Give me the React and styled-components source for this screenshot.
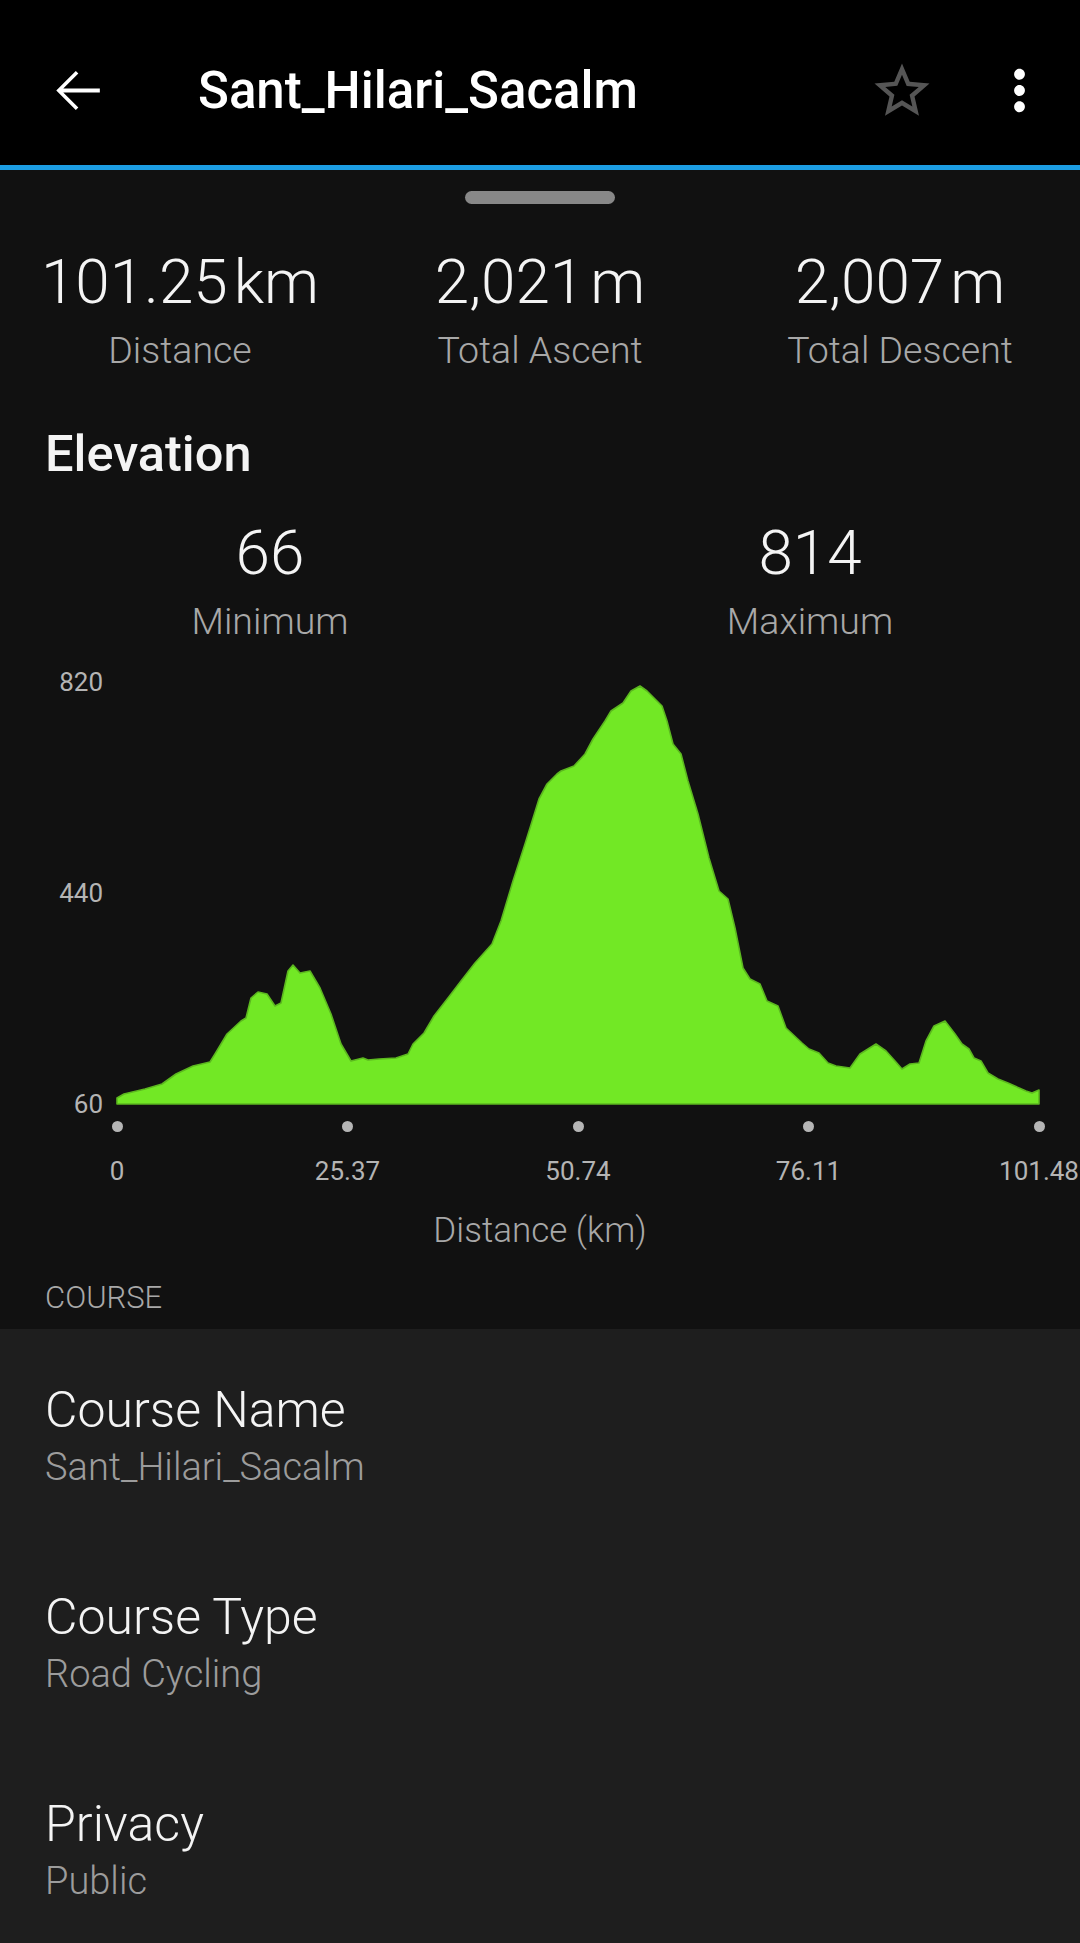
import React from 'react';
import styled, { createGlobalStyle } from 'styled-components';

const GlobalStyle = createGlobalStyle`
  html, body {
    margin: 0;
    padding: 0;
    background: #111111;
  }
  body {
    font-family: Roboto, 'Noto Sans', sans-serif;
    -webkit-font-smoothing: antialiased;
  }
`;

// elevation outline in page pixels, plot box is 117..1039 x 681..1103
const profile = [
  [117, 1097], [124, 1093], [145, 1088], [162, 1083], [176, 1073], [193, 1065], [210, 1061],
  [215, 1053], [227, 1033], [241, 1020], [246, 1017], [251, 997], [258, 991], [267, 993],
  [275, 1005], [281, 1002], [288, 970], [293, 964], [300, 972], [310, 970], [320, 987],
  [331, 1013], [341, 1043], [351, 1060], [363, 1057], [368, 1059], [379, 1058], [396, 1057],
  [408, 1053], [413, 1043], [424, 1032], [434, 1015], [448, 997], [461, 980], [475, 962],
  [492, 943], [501, 920], [513, 880], [525, 843], [530, 827], [539, 798], [547, 783],
  [557, 773], [561, 770], [574, 765], [585, 753], [593, 738], [605, 720], [611, 710],
  [623, 702], [631, 690], [640, 685], [647, 690], [662, 705], [667, 720], [673, 743],
  [681, 753], [688, 780], [698, 813], [709, 857], [719, 890], [728, 898], [735, 927],
  [743, 967], [750, 978], [760, 983], [767, 1000], [778, 1005], [786, 1027], [802, 1042],
  [809, 1048], [819, 1052], [828, 1062], [836, 1065], [850, 1067], [860, 1053], [876, 1043],
  [886, 1050], [895, 1060], [902, 1068], [910, 1063], [919, 1062], [926, 1040], [934, 1025],
  [945, 1020], [955, 1033], [962, 1043], [969, 1048], [974, 1057], [981, 1060], [988, 1072],
  [998, 1078], [1008, 1082], [1026, 1090], [1032, 1092], [1039, 1089], [1039, 1103], [117, 1103],
];

const stats = [
  { value: '101.25', unit: 'km', label: 'Distance' },
  { value: '2,021', unit: 'm', label: 'Total Ascent' },
  { value: '2,007', unit: 'm', label: 'Total Descent' },
];

const xTicks = ['0', '25.37', '50.74', '76.11', '101.48'];

const details = [
  { title: 'Course Name', value: 'Sant_Hilari_Sacalm' },
  { title: 'Course Type', value: 'Road Cycling' },
  { title: 'Privacy', value: 'Public' },
];

const App = () => {
  return (
    <>
      <GlobalStyle />
      <Page>
        <Header>
          <StatusBar />
          <Toolbar>
            <IconButton aria-label="back">
              <svg width="67" height="67" viewBox="0 0 24 24" fill="#ffffff">
                <path d="M20 11.3H6.9l5.4-5.4-.9-.9L4.4 12l7 7 .9-.9-5.4-5.4H20z" />
              </svg>
            </IconButton>
            <Title>Sant_Hilari_Sacalm</Title>
            <IconButton aria-label="favorite">
              <svg width="66" height="66" viewBox="0 0 24 24" fill="#555555">
                <path d="M22 9.24l-7.19-.62L12 2 9.19 8.63 2 9.24l5.46 4.73L5.82 21 12 17.27 18.18 21l-1.63-7.03L22 9.24zM12 15.4l-3.76 2.27 1-4.28-3.32-2.88 4.38-.38L12 6.1l1.71 4.04 4.38.38-3.32 2.88 1 4.28L12 15.4z" />
              </svg>
            </IconButton>
            <IconButton aria-label="more" $last>
              <svg width="65" height="65" viewBox="0 0 24 24" fill="#ffffff">
                <path d="M12 8c1.1 0 2-.9 2-2s-.9-2-2-2-2 .9-2 2 .9 2 2 2zm0 2c-1.1 0-2 .9-2 2s.9 2 2 2 2-.9 2-2-.9-2-2-2zm0 6c-1.1 0-2 .9-2 2s.9 2 2 2 2-.9 2-2-.9-2-2-2z" />
              </svg>
            </IconButton>
          </Toolbar>
        </Header>

        <Main>
          <Handle />

          <StatsRow>
            {stats.map((s) => (
              <Stat key={s.label}>
                <Value>
                  {s.value}
                  <Unit>{s.unit}</Unit>
                </Value>
                <Label>{s.label}</Label>
              </Stat>
            ))}
          </StatsRow>

          <SectionTitle>Elevation</SectionTitle>

          <RangeRow>
            <Stat>
              <Value>66</Value>
              <Label>Minimum</Label>
            </Stat>
            <Stat>
              <Value>814</Value>
              <Label>Maximum</Label>
            </Stat>
          </RangeRow>

          <Chart>
            <YAxis>
              <AxisText>820</AxisText>
              <AxisText>440</AxisText>
              <AxisText>60</AxisText>
            </YAxis>
            <Plot viewBox="117 681 922 422" preserveAspectRatio="none">
              <polygon
                points={profile.map((p) => p.join(',')).join(' ')}
                fill="#72e825"
                stroke="#5cb81f"
                strokeWidth="1.6"
                strokeLinejoin="round"
              />
            </Plot>
            <XAxis>
              {xTicks.map((t) => (
                <Tick key={t}>
                  <Dot />
                  <AxisText>{t}</AxisText>
                </Tick>
              ))}
            </XAxis>
          </Chart>

          <AxisTitle>Distance (km)</AxisTitle>
          <GroupLabel>COURSE</GroupLabel>
        </Main>

        <DetailList>
          {details.map((d) => (
            <DetailItem key={d.title}>
              <DetailTitle>{d.title}</DetailTitle>
              <DetailValue>{d.value}</DetailValue>
            </DetailItem>
          ))}
        </DetailList>
      </Page>
    </>
  );
};

const Page = styled.div`
  width: 1080px;
  height: 1943px;
  overflow: hidden;
  background: #111111;
  color: #f2f2f2;
`;

const Header = styled.header`
  background: #000000;
  border-bottom: 5px solid #1c9de3;
`;

const StatusBar = styled.div`
  height: 16px;
`;

const Toolbar = styled.div`
  height: 149px;
  display: flex;
  align-items: center;
  padding: 0 28px 0 44px;
`;

const IconButton = styled.div`
  display: flex;
  align-items: center;
  justify-content: center;
  margin-left: ${(p) => (p.$last ? '52px' : '0')};

  svg {
    display: block;
  }
`;

const Title = styled.h1`
  flex: 1;
  margin: 0 0 0 87px;
  font-size: 51px;
  font-weight: 500;
  line-height: 51px;
  color: #ffffff;
`;

const Main = styled.main`
  display: flex;
  flex-direction: column;
  padding-top: 21px;
`;

const Handle = styled.div`
  align-self: center;
  width: 150px;
  height: 13px;
  border-radius: 7px;
  background: #888888;
`;

const StatsRow = styled.div`
  display: grid;
  grid-template-columns: repeat(3, 1fr);
  margin-top: 47px;
`;

const Stat = styled.div`
  display: flex;
  flex-direction: column;
  align-items: center;
  gap: 19px;
`;

const Value = styled.div`
  font-size: 62px;
  font-weight: 300;
  line-height: 62px;
  color: #f4f4f4;
  white-space: nowrap;
`;

const Unit = styled.span`
  margin-left: 6px;
`;

const Label = styled.div`
  font-size: 37.5px;
  font-weight: 300;
  line-height: 37px;
  color: #a8a8a8;
  white-space: nowrap;
`;

const SectionTitle = styled.h2`
  margin: 60px 0 0 45px;
  font-size: 50.5px;
  font-weight: 500;
  line-height: 50px;
  color: #f4f4f4;
`;

const RangeRow = styled.div`
  display: grid;
  grid-template-columns: 1fr 1fr;
  margin-top: 43px;
`;

const Chart = styled.div`
  display: grid;
  grid-template-columns: 117px 922px;
  grid-template-rows: 422px auto;
  margin-top: 42px;
`;

const YAxis = styled.div`
  display: flex;
  flex-direction: column;
  justify-content: space-between;
  align-items: flex-end;
  margin: -13px 0;
  padding-right: 14px;
`;

const AxisText = styled.div`
  font-size: 26px;
  line-height: 26px;
  color: #b4b4b4;
  white-space: nowrap;
`;

const Plot = styled.svg`
  display: block;
  width: 922px;
  height: 422px;
  overflow: visible;
`;

const XAxis = styled.div`
  grid-column: 2;
  display: flex;
  justify-content: space-between;
  padding-top: 17px;
`;

const Tick = styled.div`
  width: 0;
  display: flex;
  flex-direction: column;
  align-items: center;
  gap: 26px;
`;

const Dot = styled.div`
  width: 11px;
  height: 11px;
  border-radius: 50%;
  background: #b5b5b5;
  flex-shrink: 0;
`;

const AxisTitle = styled.div`
  align-self: center;
  margin-top: 29px;
  font-size: 35px;
  font-weight: 300;
  line-height: 35px;
  color: #a8a8a8;
`;

const GroupLabel = styled.div`
  margin: 34px 0 0 45px;
  padding-bottom: 16px;
  font-size: 31px;
  font-weight: 300;
  line-height: 31px;
  color: #a8a8a8;
`;

const DetailList = styled.section`
  background: #1e1e1e;
  min-height: 700px;
`;

const DetailItem = styled.div`
  display: flex;
  flex-direction: column;
  gap: 14px;
  padding: 56px 45px 50px;
`;

const DetailTitle = styled.div`
  font-size: 50px;
  font-weight: 300;
  line-height: 50px;
  color: #f4f4f4;
`;

const DetailValue = styled.div`
  font-size: 38px;
  font-weight: 300;
  line-height: 37px;
  color: #9c9c9c;
`;

export default App;
